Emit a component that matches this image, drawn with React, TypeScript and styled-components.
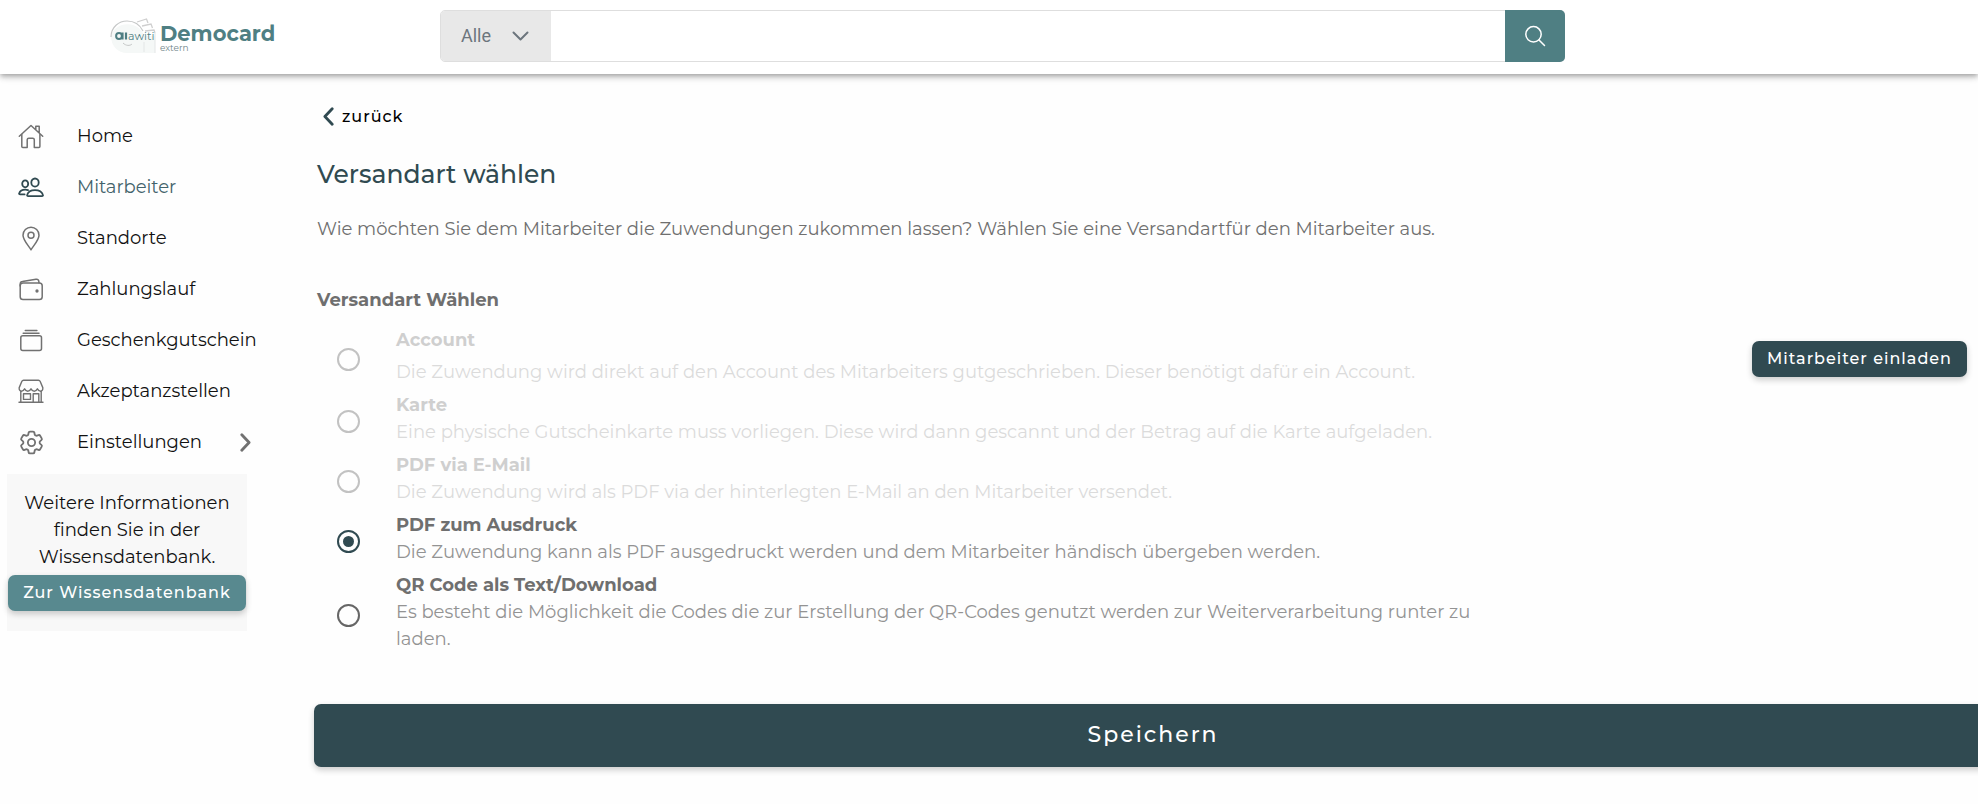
import React, { useState } from "react";
import styled, { createGlobalStyle, css } from "styled-components";
import { HiOutlineCog6Tooth } from "react-icons/hi2";

const colors = {
  dark: "#304a51",
  teal: "#4f7f83",
  tealLight: "#58898f",
  text: "#6f6f6f",
  muted: "#939393",
};

const GlobalStyle = createGlobalStyle`
  *, *::before, *::after { box-sizing: border-box; }
  body {
    margin: 0;
    background: #fefefe;
    color: #111;
    font-family: Montserrat, Inter, sans-serif;
    font-size: 18px;
    line-height: 27px;
    overflow-x: hidden;
  }
  button, input, select { font: inherit; }
`;

const Header = styled.header`
  display: grid;
  grid-template-columns: 440px minmax(0, 1125fr) minmax(0, 413fr);
  align-items: center;
  height: 74px;
  padding-bottom: 3px;
  background: #fff;
  box-shadow: 0 2px 4px -1px rgba(0, 0, 0, 0.2), 0 4px 5px rgba(0, 0, 0, 0.14), 0 1px 10px rgba(0, 0, 0, 0.12);
`;

const Brand = styled.a`
  display: flex;
  align-items: center;
  gap: 4px;
  padding-left: 110px;
  color: ${colors.teal};
  text-decoration: none;
`;

const BrandText = styled.span`
  display: flex;
  flex-direction: column;
  padding-top: 6px;
`;

const BrandName = styled.span`
  font-size: 21px;
  font-weight: 700;
  line-height: 18px;
`;

const BrandNote = styled.span`
  font-size: 9px;
  line-height: 9px;
  color: #6f8388;
`;

const Search = styled.form`
  display: flex;
  height: 52px;
  border: 1px solid #dedede;
  border-radius: 5px;
`;

const SelectWrap = styled.div`
  display: flex;
  align-items: center;
  width: 110px;
  border-radius: 4px 0 0 4px;
  background: #e8e8e8;
  color: #6c757d;
`;

const Select = styled.select`
  width: 110px;
  height: 100%;
  padding: 0 20px;
  border: 0;
  background: transparent;
  color: inherit;
  font-family: Roboto, sans-serif;
  font-size: 18px;
  appearance: none;
`;

const SelectArrow = styled.svg`
  flex: none;
  margin-left: -39px;
  pointer-events: none;
`;

const SearchInput = styled.input`
  flex: 1;
  min-width: 0;
  padding: 0 16px;
  border: 0;
  background: #fff;
`;

const SearchButton = styled.button`
  display: grid;
  place-items: center;
  width: 60px;
  margin: -1px;
  border: 0;
  border-radius: 0 5px 5px 0;
  background: ${colors.teal};
  color: #fff;
`;

const Layout = styled.div`
  display: grid;
  grid-template-columns: 251px minmax(0, 1fr);
  column-gap: 63px;
`;

const Sidebar = styled.aside`
  padding-top: 37px;
`;

const NavList = styled.ul`
  margin: 0;
  padding: 0;
  list-style: none;
`;

const NavLink = styled.a<{ $active?: boolean }>`
  display: flex;
  align-items: center;
  height: 51px;
  padding-left: 18px;
  gap: 33px;
  color: ${(p) => (p.$active ? "#43636b" : "#111")};
  text-decoration: none;
  white-space: nowrap;

  svg {
    flex: none;
    color: ${(p) => (p.$active ? colors.dark : "#717171")};
  }
`;

const NavIcon = styled.span`
  display: flex;
  justify-content: center;
  width: 26px;
`;

const NavLabel = styled.span`
  flex: 1;
`;

const InfoBox = styled.section`
  display: flex;
  flex-direction: column;
  margin: 6px 4px 0 7px;
  padding: 16px 1px 20px;
  background: #f8f8f8;
  text-align: center;
`;

const InfoText = styled.p`
  margin: 0 12px 4px;
`;

const Button = styled.button<{ $tone?: "light"; $large?: boolean }>`
  height: 36px;
  padding: 0 15px;
  border: 0;
  border-radius: 7px;
  background: ${(p) => (p.$tone === "light" ? colors.tealLight : colors.dark)};
  box-shadow: 0 3px 6px rgba(0, 0, 0, 0.2);
  color: #fff;
  font-size: 16px;
  font-weight: 500;
  line-height: 24px;
  letter-spacing: 1px;
  white-space: nowrap;
  ${(p) =>
    p.$large &&
    css`
      width: calc(100% + 14px);
      height: 63px;
      font-size: 22px;
      letter-spacing: 2px;
    `}
`;

const Main = styled.main`
  padding-top: 28px;
`;

const BackLink = styled.a`
  display: inline-flex;
  align-items: center;
  gap: 8px;
  height: 28px;
  padding-left: 9px;
  color: #000;
  font-size: 16px;
  font-weight: 500;
  letter-spacing: 1px;
  text-decoration: none;
`;

const Title = styled.h1`
  margin: 22px 3px 0;
  color: ${colors.dark};
  font-size: 25px;
  font-weight: 500;
  line-height: 36px;
`;

const Intro = styled.p`
  margin: 24px 3px 0;
  color: ${colors.text};
`;

const Options = styled.fieldset`
  min-width: 0;
  margin: 44px 0 0;
  padding: 0;
  border: 0;
`;

const Legend = styled.legend`
  padding: 0 3px;
  margin-bottom: 13px;
  color: ${colors.text};
  font-weight: 700;
`;

const OptionRow = styled.div<{ $disabled?: boolean }>`
  display: grid;
  grid-template-columns: 23px minmax(0, 1090px) 1fr;
  align-items: center;
  column-gap: 36px;
  padding-left: 23px;

  label {
    opacity: ${(p) => (p.$disabled ? 0.32 : 1)};
  }
`;

const Radio = styled.input`
  display: grid;
  place-items: center;
  width: 23px;
  height: 23px;
  margin: 0;
  border: 2px solid #666;
  border-radius: 50%;
  appearance: none;

  &:checked {
    border-color: ${colors.dark};
  }
  &:checked::before {
    content: "";
    width: 11px;
    height: 11px;
    border-radius: 50%;
    background: ${colors.dark};
  }
  &:disabled {
    border-color: #c2c2c2;
  }
`;

const OptionLabel = styled.label<{ $spaced?: boolean }>`
  display: flex;
  flex-direction: column;
  gap: ${(p) => (p.$spaced ? 5 : 0)}px;
  padding-bottom: 6px;
`;

const OptionTitle = styled.span`
  color: ${colors.text};
  font-weight: 700;
`;

const OptionText = styled.span`
  color: ${colors.muted};
`;

const RowAction = styled.div`
  display: flex;
  justify-content: flex-end;
  padding-right: 11px;
`;

const Footer = styled.div`
  margin-top: 45px;
  padding-bottom: 37px;
`;

const Icon = ({ children, width = 1.5 }: { children: React.ReactNode; width?: number }) => (
  <svg
    width="26"
    height="26"
    viewBox="0 1 26 26"
    fill="none"
    stroke="currentColor"
    strokeWidth={width}
    strokeLinecap="round"
    strokeLinejoin="round"
    aria-hidden="true"
  >
    {children}
  </svg>
);

const HomeIcon = () => (
  <Icon>
    <path d="M1.3 13.2 13 2.5l11.7 10.7M17.8 6.6V3.2h3.4v6.4" />
    <path d="M3.8 11.4v12a1 1 0 0 0 1 1h4.4v-7.6a1.6 1.6 0 0 1 1.6-1.6h3.9a1.6 1.6 0 0 1 1.6 1.6v7.6h4.6a1 1 0 0 0 1-1v-12" />
  </Icon>
);

const PeopleIcon = () => (
  <Icon width={1.8}>
    <ellipse cx="7.2" cy="9.8" rx="3" ry="3.5" />
    <ellipse cx="17" cy="8.6" rx="3.7" ry="4.1" />
    <path d="M10.2 22.2h13.7c.9 0 1.3-.6 1-1.4-1-2.9-4.1-4.6-7.9-4.6s-6.9 1.7-7.8 4.6c-.3.8.1 1.4 1 1.4Z" />
    <path d="M6.6 20.4H2.1c-.8 0-1.2-.6-.9-1.3.9-2.3 3.2-3.5 6-3.5 1 0 2 .2 2.8.5" />
  </Icon>
);

const PinIcon = () => (
  <Icon>
    <path d="M13 24.8C10.5 20.6 5 15 5 10.2a8 8 0 0 1 16 0c0 4.8-5.5 10.4-8 14.6Z" />
    <circle cx="13" cy="10.2" r="3" />
  </Icon>
);

const WalletIcon = () => (
  <Icon>
    <rect x="2.2" y="7" width="22" height="16.5" rx="2.8" />
    <path d="M2.2 10V8c0-1.4.8-2.3 2.2-2.5L18 3.2c1.5-.2 2.6.6 2.8 2l.2 1.6" />
    <circle cx="19" cy="15" r=".9" fill="currentColor" />
  </Icon>
);

const CardsIcon = () => (
  <Icon>
    <rect x="2.8" y="8.8" width="20.7" height="14.6" rx="2" />
    <path d="M7.3 3.6h11.6M5.2 6.3h15.8" />
  </Icon>
);

const ShopIcon = () => (
  <Icon width={1.4}>
    <path d="M5.5 2.2h15c.8 0 1.3.4 1.6 1.1l2.700 6.300c.3 2.200-.7 3.600-2.200 3.600-1.500 0-2.300-.8-3.200-2.400-.9 1.600-2 2.400-3.200 2.400s-2.300-.8-3.200-2.400c-.9 1.600-2 2.400-3.200 2.400s-2.300-.8-3.200-2.400c-.9 1.600-1.700 2.400-3.200 2.400-1.500 0-2.500-1.400-2.200-3.600l2.700-6.300c.3-.7.8-1.100 1.600-1.100Z" />
    <path d="M2.8 13.2v11M23.2 13.2v11M1 24.2h24M5.5 15.8h7v5.600h-7zM15.200 24v-8.200h5.600v8.200" />
  </Icon>
);

const Chevron = ({ left }: { left?: boolean }) => (
  <svg
    width="11"
    height="19"
    viewBox="0 0 11 19"
    fill="none"
    stroke={left ? colors.dark : "currentColor"}
    strokeWidth="2.8"
    strokeLinecap="round"
    strokeLinejoin="round"
    aria-hidden="true"
  >
    <path d={left ? "M9.2 1.7 1.9 9.5l7.3 7.8" : "M1.8 1.7l7.3 7.8-7.3 7.8"} />
  </svg>
);

const LogoMark = () => (
  <svg width="46" height="36" viewBox="0 0 46 36" aria-hidden="true">
    <path d="M27 4 36.5 1l1.5 4M32 8l9-2 1.5 4M35 13l9-1 1 3" fill="none" stroke="#cfcfcf" strokeWidth="1.3" />
    <path d="M1 18a17 15.500 0 0 1 33 0h11v17H17C8 35 1 28 1 18Z" fill="#f5f8f7" />
    <path d="M1 19C1 9 9 3 17 3s13 4 16 10" fill="none" stroke="#c5c7c7" strokeWidth="1.2" />
    <path d="M34 24v10M45 15v20" stroke="#e3e6e6" strokeWidth="1" />
    <path d="M13 25c3 3 7 3 9 1" fill="none" stroke="#c5c7c7" strokeWidth="1" />
    <circle cx="9" cy="18" r="2.9" fill="none" stroke={colors.teal} strokeWidth="2" />
    <path d="M12.500 14.500v7M16 14.500v7" stroke={colors.teal} strokeWidth="2.2" />
    <text x="18" y="22" fontSize="11" fill={colors.teal}>awiti</text>
  </svg>
);

const navItems = [
  { label: "Home", icon: <HomeIcon /> },
  { label: "Mitarbeiter", icon: <PeopleIcon />, active: true },
  { label: "Standorte", icon: <PinIcon /> },
  { label: "Zahlungslauf", icon: <WalletIcon /> },
  { label: "Geschenkgutschein", icon: <CardsIcon /> },
  { label: "Akzeptanzstellen", icon: <ShopIcon /> },
  { label: "Einstellungen", icon: <HiOutlineCog6Tooth size={29} />, expandable: true },
];

const options = [
  {
    id: "account",
    title: "Account",
    text: "Die Zuwendung wird direkt auf den Account des Mitarbeiters gutgeschrieben. Dieser benötigt dafür ein Account.",
    disabled: true,
    action: "Mitarbeiter einladen",
  },
  {
    id: "karte",
    title: "Karte",
    text: "Eine physische Gutscheinkarte muss vorliegen. Diese wird dann gescannt und der Betrag auf die Karte aufgeladen.",
    disabled: true,
  },
  {
    id: "email",
    title: "PDF via E-Mail",
    text: "Die Zuwendung wird als PDF via der hinterlegten E-Mail an den Mitarbeiter versendet.",
    disabled: true,
  },
  {
    id: "druck",
    title: "PDF zum Ausdruck",
    text: "Die Zuwendung kann als PDF ausgedruckt werden und dem Mitarbeiter händisch übergeben werden.",
  },
  {
    id: "qr",
    title: "QR Code als Text/Download",
    text: "Es besteht die Möglichkeit die Codes die zur Erstellung der QR-Codes genutzt werden zur Weiterverarbeitung runter zu laden.",
  },
];

export default function App() {
  const [selected, setSelected] = useState("druck");
  return (
    <>
      <GlobalStyle />
      <Header>
        <Brand href="#">
          <LogoMark />
          <BrandText>
            <BrandName>Democard</BrandName>
            <BrandNote>extern</BrandNote>
          </BrandText>
        </Brand>
        <Search role="search" onSubmit={(e) => e.preventDefault()}>
          <SelectWrap>
            <Select aria-label="Kategorie">
              <option>Alle</option>
            </Select>
            <SelectArrow
              width="17"
              height="10"
              viewBox="0 0 17 10"
              fill="none"
              stroke="currentColor"
              strokeWidth="2"
              strokeLinecap="round"
              strokeLinejoin="round"
            >
              <path d="M1.5 1.5l7 7 7-7" />
            </SelectArrow>
          </SelectWrap>
          <SearchInput type="search" aria-label="Suche" />
          <SearchButton aria-label="Suchen">
            <svg width="22" height="22" viewBox="0 0 22 22" fill="none" stroke="currentColor" strokeWidth="1.5" strokeLinecap="round">
              <circle cx="9.5" cy="9.3" r="7.7" />
              <path d="M15 15l5.5 5.5" />
            </svg>
          </SearchButton>
        </Search>
      </Header>
      <Layout>
        <Sidebar>
          <nav>
            <NavList>
              {navItems.map((item) => (
                <li key={item.label}>
                  <NavLink href="#" $active={item.active}>
                    <NavIcon>{item.icon}</NavIcon>
                    <NavLabel>{item.label}</NavLabel>
                    {item.expandable && <Chevron />}
                  </NavLink>
                </li>
              ))}
            </NavList>
          </nav>
          <InfoBox>
            <InfoText>Weitere Informationen finden Sie in der Wissensdatenbank.</InfoText>
            <Button type="button" $tone="light">Zur Wissensdatenbank</Button>
          </InfoBox>
        </Sidebar>
        <Main>
          <BackLink href="#">
            <Chevron left />
            zurück
          </BackLink>
          <Title>Versandart wählen</Title>
          <Intro>
            Wie möchten Sie dem Mitarbeiter die Zuwendungen zukommen lassen? Wählen Sie eine Versandartfür den Mitarbeiter aus.
          </Intro>
          <Options>
            <Legend>Versandart Wählen</Legend>
            {options.map((o) => (
              <OptionRow key={o.id} $disabled={o.disabled}>
                <Radio
                  type="radio"
                  name="versandart"
                  id={o.id}
                  disabled={o.disabled}
                  checked={selected === o.id}
                  onChange={() => setSelected(o.id)}
                />
                <OptionLabel htmlFor={o.id} $spaced={!!o.action}>
                  <OptionTitle>{o.title}</OptionTitle>
                  <OptionText>{o.text}</OptionText>
                </OptionLabel>
                {o.action && (
                  <RowAction>
                    <Button type="button">{o.action}</Button>
                  </RowAction>
                )}
              </OptionRow>
            ))}
          </Options>
          <Footer>
            <Button type="submit" $large>Speichern</Button>
          </Footer>
        </Main>
      </Layout>
    </>
  );
}
